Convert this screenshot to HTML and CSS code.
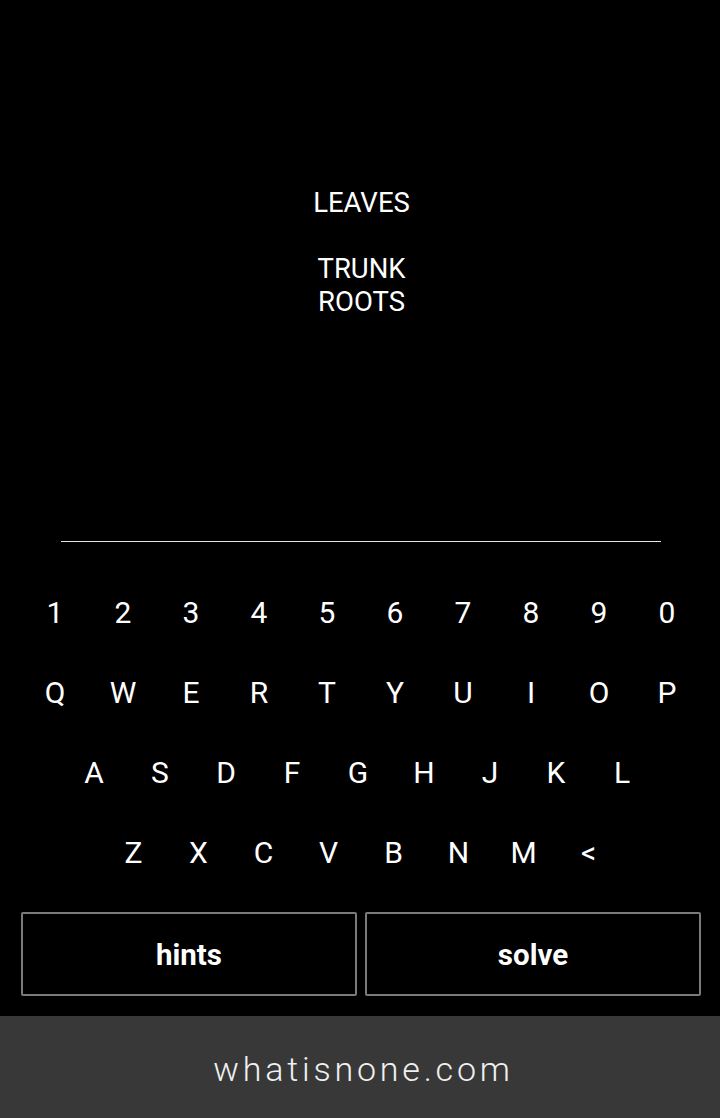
FILE: index.html
```html
<!DOCTYPE html>
<html>
<head>
<meta charset="utf-8">
<link rel="stylesheet" href="styles.css">
</head>
<body>
<div class="app">
  <main class="game">
    <section class="puzzle">
      <div class="clue">LEAVES</div>
      <div class="clue"></div>
      <div class="clue">TRUNK</div>
      <div class="clue">ROOTS</div>
    </section>
    <div class="answer"></div>
    <section class="keyboard">
      <div class="row row-10">
        <span class="key">1</span><span class="key">2</span><span class="key">3</span><span class="key">4</span><span class="key">5</span><span class="key">6</span><span class="key">7</span><span class="key">8</span><span class="key">9</span><span class="key">0</span>
      </div>
      <div class="row row-10">
        <span class="key">Q</span><span class="key">W</span><span class="key">E</span><span class="key">R</span><span class="key">T</span><span class="key">Y</span><span class="key">U</span><span class="key">I</span><span class="key">O</span><span class="key">P</span>
      </div>
      <div class="row row-9">
        <span class="key">A</span><span class="key">S</span><span class="key">D</span><span class="key">F</span><span class="key">G</span><span class="key">H</span><span class="key">J</span><span class="key">K</span><span class="key">L</span>
      </div>
      <div class="row row-8">
        <span class="key">Z</span><span class="key">X</span><span class="key">C</span><span class="key">V</span><span class="key">B</span><span class="key">N</span><span class="key">M</span><span class="key">&lt;</span>
      </div>
    </section>
    <section class="actions">
      <button class="btn">hints</button>
      <button class="btn">solve</button>
    </section>
  </main>
  <footer class="footer">whatisnone.com</footer>
</div>
</body>
</html>
```
FILE: styles.css
```css
html, body {
  margin: 0;
  padding: 0;
  background: #000;
}
body {
  font-family: Roboto, "Noto Sans", sans-serif;
  color: #fff;
}
.app {
  width: 720px;
  height: 1118px;
  display: flex;
  flex-direction: column;
}
.game {
  height: 1016px;
  display: flex;
  flex-direction: column;
}
.puzzle {
  height: 355px;
  padding-top: 186px;
  padding-left: 3px;
  display: flex;
  flex-direction: column;
  align-items: center;
}
.clue {
  height: 33px;
  line-height: 33px;
  font-size: 27.5px;
}
.answer {
  margin: 0 59px 0 61px;
  border-top: 1px solid #e6e6e6;
}
.keyboard {
  margin-top: 31px;
  display: flex;
  flex-direction: column;
}
.row {
  height: 80px;
  display: flex;
  justify-content: center;
  align-items: center;
}
.key {
  text-align: center;
  font-size: 30px;
  line-height: 80px;
}
.row-10 {
  padding-left: 2px;
}
.row-10 .key { width: 68px; }
.row-9 { padding-right: 4px; }
.row-9 .key { width: 66px; }
.row-8 { padding-left: 2px; }
.row-8 .key { width: 65px; }
.actions {
  margin-top: 19px;
  padding: 0 19px 0 21px;
  display: flex;
  gap: 8px;
}
.btn {
  flex: 1;
  height: 84px;
  background: #000;
  color: #fff;
  border: 2px solid #7a7a7a;
  border-radius: 2px;
  font-family: Roboto, "Noto Sans", sans-serif;
  font-weight: 700;
  font-size: 29.5px;
  padding: 2px 0 0 0;
}
.footer {
  height: 102px;
  padding-top: 4px;
  padding-left: 7px;
  box-sizing: border-box;
  background: #383838;
  color: #f0f0f0;
  display: flex;
  align-items: center;
  justify-content: center;
  font-weight: 300;
  font-size: 34px;
  letter-spacing: 3.8px;
}
```
